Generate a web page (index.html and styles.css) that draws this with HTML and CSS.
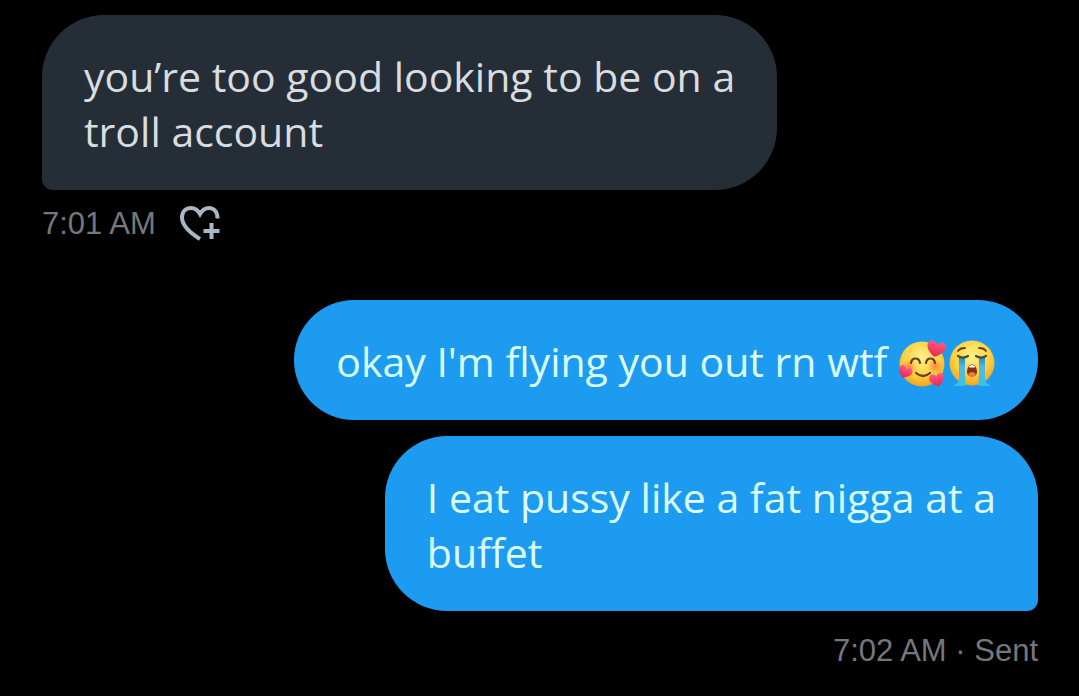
FILE: index.html
```html
<!DOCTYPE html>
<html lang="en">
<head>
<meta charset="utf-8">
<meta name="viewport" content="width=device-width, initial-scale=1">
<title>Messages</title>
<link rel="stylesheet" href="styles.css">
</head>
<body>
<main class="chat">
  <section class="group group-received">
    <p class="bubble bubble-received bubble-tail-left">you’re too good looking to be on a<br>troll account</p>
    <div class="meta">
      <time>7:01 AM</time>
      <button class="react" type="button" aria-label="Add reaction">
        <svg class="react-icon" viewBox="0 0 40 36" fill="none" stroke="currentColor" stroke-width="4">
          <path d="M20 33C12 28 2 20 2 11.500C2 5.500 6 2 11 2C15 2 18 4.500 20 8C22 4.500 25 2 29 2C34 2 37.500 6 37.500 12.500"/>
          <path d="M31.500 17V33M23.500 25H39.500"/>
        </svg>
      </button>
    </div>
  </section>

  <section class="group group-sent">
    <p class="bubble bubble-sent">okay I'm flying you out rn wtf <span class="emojis"><svg class="emoji" viewBox="0 0 48 48" role="img" aria-label="Smiling face with hearts">
      <defs>
        <radialGradient id="face" cx=".5" cy=".35" r=".65"><stop offset="0" stop-color="#fff08a"/><stop offset=".6" stop-color="#fdd344"/><stop offset="1" stop-color="#f5a31c"/></radialGradient>
        <radialGradient id="blush"><stop offset="0" stop-color="#ff6b3d" stop-opacity=".8"/><stop offset="1" stop-color="#ff8a3d" stop-opacity="0"/></radialGradient>
        <linearGradient id="heart" x2="0" y2="1"><stop offset="0" stop-color="#ff5a83"/><stop offset="1" stop-color="#e5264f"/></linearGradient>
        <path id="love" d="M0 8C-7 4-10 0-9-4C-8-9-2-9 0-4C2-9 8-9 9-4C10 0 7 4 0 8Z" fill="url(#heart)"/>
      </defs>
      <circle cx="24" cy="25" r="22.500" fill="url(#face)"/>
      <circle cx="11" cy="28" r="8" fill="url(#blush)"/><circle cx="37" cy="27" r="8" fill="url(#blush)"/>
      <path d="M13 24C14 18 21 18 22 24M28 24C29 18 36 18 37 24M18 34Q25 40 32 34" fill="none" stroke="#67401d" stroke-width="2.200" stroke-linecap="round"/>
      <use href="#love" transform="translate(38 10) rotate(13)"/>
      <use href="#love" transform="translate(7 33) rotate(25) scale(.75)"/>
      <use href="#love" transform="translate(39 41) rotate(-12) scale(.82)"/>
    </svg><svg class="emoji" viewBox="0 0 48 48" role="img" aria-label="Loudly crying face">
      <defs><linearGradient id="tear" x2="0" y2="1"><stop offset="0" stop-color="#168fc4"/><stop offset=".35" stop-color="#55b9de"/><stop offset="1" stop-color="#31c3ef"/></linearGradient></defs>
      <circle cx="24" cy="24" r="22.500" fill="url(#face)"/>
      <path d="M11 18H17V36Q17 42 18 47H6V46C10 45 11 43 11 38ZM37 18H31V36Q31 42 30 47H42V46C38 45 37 43 37 38Z" fill="url(#tear)"/>
      <path d="M10 12Q12 9 17 9M31 9Q36 9 38 12" fill="none" stroke="#67401d" stroke-width="1.800" stroke-linecap="round"/>
      <path d="M10 17Q15 20 20 17M28 17Q33 20 38 17" fill="none" stroke="#54452b" stroke-width="2.200" stroke-linecap="round"/>
      <path d="M19 33C19 23 29 23 29 33C29 39 19 39 19 33Z" fill="#84301d"/>
      <path d="M21 27.500Q24 24.500 27 27.500V28.500H21Z" fill="#fff"/>
      <path d="M20 35Q24 31 28 35Q27 37.500 24 37.500Q21 37.500 20 35Z" fill="#f47645"/>
    </svg></span></p>
    <p class="bubble bubble-sent bubble-tail-right">I eat pussy like a fat nigga at a<br>buffet</p>
    <div class="meta"><span><time>7:02 AM</time> · Sent</span></div>
  </section>
</main>
</body>
</html>
```
FILE: styles.css
```css
* {
  box-sizing: border-box;
}

body {
  margin: 0;
  background: #000;
  font-family: "Open Sans", sans-serif;
}

.chat {
  display: flex;
  flex-direction: column;
  gap: 54px;
  padding: 15px 41px 22px 42px;
}

.group {
  display: flex;
  flex-direction: column;
}

.group-received {
  align-items: flex-start;
}

.group-sent {
  align-items: flex-end;
  gap: 16px;
}

.bubble {
  margin: 0;
  padding: 34px 42px 31px;
  border-radius: 62px;
  font-size: 41px;
  line-height: 55px;
}

.bubble-received {
  background: #252e36;
  color: #d9dce0;
}

.bubble-sent {
  background: #1d9bf0;
  color: #d9ffff;
}

.bubble-tail-left {
  border-bottom-left-radius: 11px;
}

.bubble-tail-right {
  border-bottom-right-radius: 11px;
}

.emojis {
  display: inline-flex;
  gap: 2px;
  vertical-align: -10px;
}

.emoji {
  width: 48px;
  height: 48px;
}

.meta {
  display: flex;
  align-items: center;
  gap: 24px;
  padding-top: 12px;
  color: #75777b;
  font-family: "Liberation Sans", sans-serif;
  font-size: 31px;
  line-height: 44px;
}

.group-sent .meta {
  padding-top: 2px;
}

.react {
  display: flex;
  padding: 0;
  border: 0;
  background: none;
  color: #a9b8c5;
}

.react-icon {
  width: 40px;
  height: 36px;
}
```
